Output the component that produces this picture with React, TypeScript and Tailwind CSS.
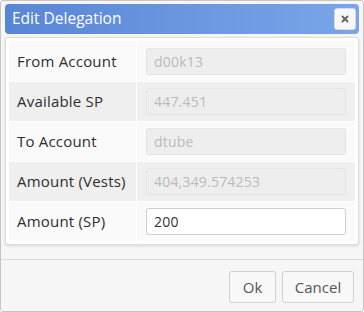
import { X } from 'lucide-react';

const rows = [
  { label: 'From Account', value: 'd00k13', disabled: true },
  { label: 'Available SP', value: '447.451', disabled: true },
  { label: 'To Account', value: 'dtube', disabled: true },
  { label: 'Amount (Vests)', value: '404,349.574253', disabled: true },
  { label: 'Amount (SP)', value: '200', disabled: false },
];

export default function App() {
  return (
    <div
      className="flex h-[312px] w-[364px] flex-col overflow-hidden rounded-[3px] border border-[#c5c5c5] bg-[#f6f6f6] text-[#333]"
      style={{ fontFamily: '"Open Sans", sans-serif' }}
    >
      <div className="px-[4px] pt-[3px]">
        <div className="flex h-[30px] items-center justify-between rounded-[4px] bg-gradient-to-r from-[#5886d6] to-[#7aa6e8] pl-[7px] pr-[3px]">
          <span className="text-[15.5px] text-white">Edit Delegation</span>
          <button
            type="button"
            className="flex h-[22px] w-[22px] items-center justify-center rounded-[3px] border border-[#d8d8d8] bg-[#f7f7f7]"
          >
            <X className="h-[10px] w-[10px] text-[#666]" strokeWidth={4.5} />
          </button>
        </div>
      </div>

      <div className="mx-[4px] mt-[3px] rounded-[3px] border border-[#ddd] bg-white p-[3px] shadow-[0_1px_3px_rgba(0,0,0,0.12)]">
        {rows.map((row, i) => (
          <div
            key={row.label}
            className={`flex h-[40px] ${i % 2 === 1 ? 'bg-[#efefef]' : 'bg-[#fafafa]'} ${
              i > 0 ? 'border-t border-white' : ''
            }`}
          >
            <div className="flex w-[128px] items-center border-r border-white pl-[8px] text-[15px] tracking-[0.2px] text-[#2e2e2e]">
              {row.label}
            </div>
            <div className="flex flex-1 items-center pl-[9px] pr-[9px]">
              <div
                className={`flex h-[27px] w-full items-center rounded-[3px] border px-[7px] text-[14px] tracking-[0.2px] ${
                  row.disabled
                    ? 'border-[#e4e4e4] bg-[#eeeeee] text-[#bbbbbb]'
                    : 'border-[#cfcfcf] bg-white text-[#333]'
                }`}
              >
                {row.value}
              </div>
            </div>
          </div>
        ))}
      </div>

      <div className="mt-[14px] border-t border-[#dcdcdc]" />

      <div className="flex justify-end gap-[6px] pr-[9px] pt-[11px]">
        <button
          type="button"
          className="h-[32px] w-[47px] rounded-[3px] border border-[#d0d0d0] bg-[#f8f8f8] text-[15px] text-[#555]"
        >
          Ok
        </button>
        <button
          type="button"
          className="h-[32px] w-[72px] rounded-[3px] border border-[#d0d0d0] bg-[#f8f8f8] text-[15px] text-[#555]"
        >
          Cancel
        </button>
      </div>
    </div>
  );
}
